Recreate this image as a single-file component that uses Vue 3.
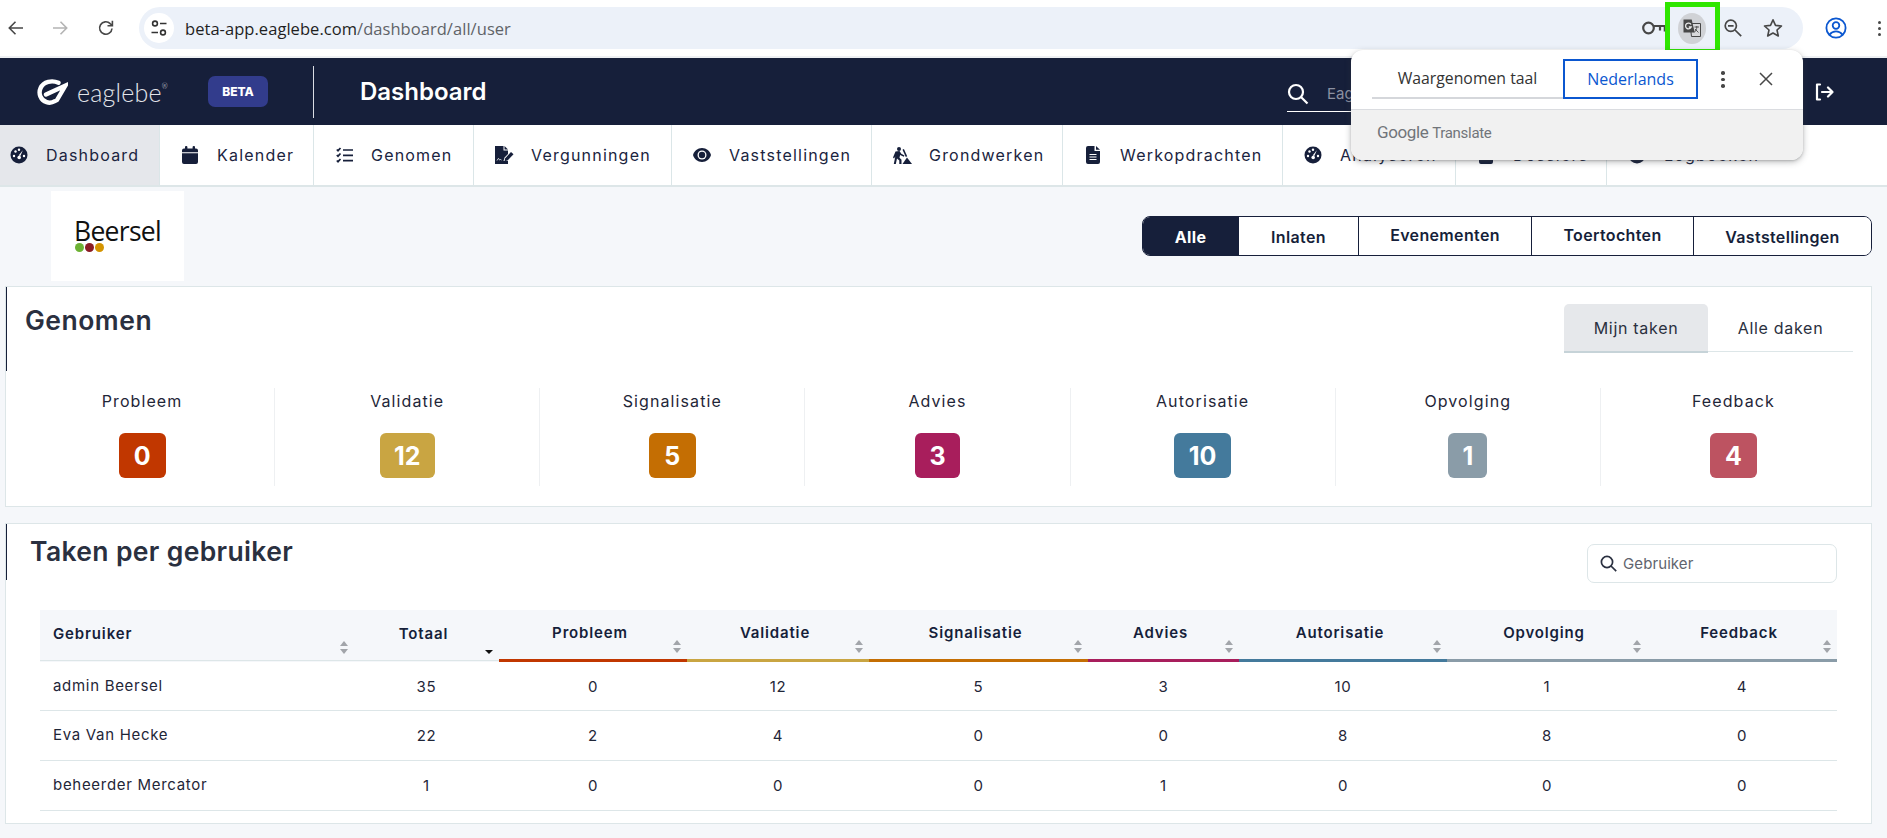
<script setup>
const tabs = [
  { label: 'Dashboard', icon: 'gauge', active: true },
  { label: 'Kalender', icon: 'calendar' },
  { label: 'Genomen', icon: 'list' },
  { label: 'Vergunningen', icon: 'sign' },
  { label: 'Vaststellingen', icon: 'eye' },
  { label: 'Grondwerken', icon: 'dig' },
  { label: 'Werkopdrachten', icon: 'file' },
  { label: 'Analyseren', icon: 'gauge' },
  { label: 'Dossiers', icon: 'file' },
  { label: 'Logboeken', icon: 'gauge' },
]
const filters = [
  { label: 'Alle', active: true },
  { label: 'Inlaten' },
  { label: 'Evenementen', raised: true },
  { label: 'Toertochten', raised: true },
  { label: 'Vaststellingen' },
]
const stats = [
  { label: 'Probleem', value: 0, color: '#c13700', width: 47 },
  { label: 'Validatie', value: 12, color: '#c9a542', width: 55 },
  { label: 'Signalisatie', value: 5, color: '#c46e03', width: 47 },
  { label: 'Advies', value: 3, color: '#a81e5c', width: 45 },
  { label: 'Autorisatie', value: 10, color: '#447a9c', width: 57 },
  { label: 'Opvolging', value: 1, color: '#8a9ca8', width: 39 },
  { label: 'Feedback', value: 4, color: '#bd5361', width: 47 },
]
const rows = [
  { name: 'admin Beersel', total: 35, cells: [0, 12, 5, 3, 10, 1, 4] },
  { name: 'Eva Van Hecke', total: 22, cells: [2, 4, 0, 0, 8, 8, 0] },
  { name: 'beheerder Mercator', total: 1, cells: [0, 0, 0, 1, 0, 0, 0] },
]
</script>

<template>
  <div class="page">
    <header class="chrome">
      <button class="cbtn">
        <svg width="18" height="18" viewBox="0 0 18 18" fill="none" stroke="#474747" stroke-width="1.6"><path d="M16 9H2.5M8.5 2.8 2.3 9l6.2 6.2" /></svg>
      </button>
      <button class="cbtn">
        <svg width="18" height="18" viewBox="0 0 18 18" fill="none" stroke="#b4b4b4" stroke-width="1.6"><path d="M2 9h13.5M9.5 2.8 15.7 9l-6.2 6.2" /></svg>
      </button>
      <button class="cbtn reload">
        <svg width="18" height="18" viewBox="0 0 18 18" fill="none" stroke="#474747" stroke-width="1.6"><path d="M15 9.5A6.2 6.2 0 1 1 13.2 4.6L15.2 6.4" /><path d="M15.4 1.8v4.9h-4.9" /></svg>
      </button>
      <div class="addr">
        <span class="site">
          <svg width="18" height="18" viewBox="0 0 18 18" fill="none" stroke="#333" stroke-width="1.6"><circle cx="5" cy="4.5" r="2.4" /><path d="M10 4.5h6.5M1.5 13.5H8" /><circle cx="13" cy="13.5" r="2.4" /></svg>
        </span>
        <span class="url"><b>beta-app.eaglebe.com</b>/dashboard/all/user</span>
        <div class="tools">
          <span class="tool">
            <svg width="24" height="16" viewBox="0 0 24 16" fill="none" stroke="#474747" stroke-width="2.2"><circle cx="6.500" cy="8" r="5.300" /><path d="M12 6H22.800v5.500M18 6.400v4" /></svg>
          </span>
          <span class="tool">
            <span class="trans">
              <svg width="20" height="20" viewBox="0 0 20 20"><path d="M8 5.500h10.500v13H9.500z" fill="#d8d8da" stroke="#474747" stroke-width="1" /><path d="M1.500 1.500h8.200l3 13H1.500z" fill="#474747" /><path d="M9 6.500A2.900 2.900 0 1 0 9.200 9H6.800" fill="none" stroke="#e8e8e8" stroke-width="1.300" /><path d="M12.500 9h4.500M14.800 8v1c0 2-1 4-2.500 5.300M13 11l3.500 3.500" fill="none" stroke="#474747" stroke-width=".9" /></svg>
            </span>
          </span>
          <span class="tool">
            <svg width="20" height="20" viewBox="0 0 20 20" fill="none" stroke="#474747" stroke-width="1.7"><circle cx="7.8" cy="7.8" r="5.6" /><path d="M12 12l6.200 6.200M5 7.800h5.600" /></svg>
          </span>
          <span class="tool">
            <svg width="20" height="20" viewBox="0 0 20 20" fill="none" stroke="#474747" stroke-width="1.6" stroke-linejoin="round"><path d="M10 1.800l2.500 5.600 6 .6-4.500 4 1.300 6L10 15l-5.300 3 1.300-6-4.500-4 6-.6z" /></svg>
          </span>
        </div>
      </div>
      <svg class="profile" width="24" height="24" viewBox="0 0 24 24" fill="none" stroke="#0b57d0" stroke-width="1.8"><circle cx="12" cy="12" r="9.6" /><circle cx="12" cy="9.5" r="3.3" /><path d="M5.500 18.600c1.800-2.400 4-3.300 6.500-3.300s4.700.9 6.500 3.300" /></svg>
      <span class="ckebab"><i></i><i></i><i></i></span>
    </header>

    <div class="navbar">
      <div class="logo">
        <svg width="31" height="26" viewBox="0 0 31 26" fill="none" stroke="#fff" stroke-width="4.4" stroke-linecap="round"><path d="M21.500 3.800C15 .8 6.500 2.600 3.600 9c-2.500 5.500-.1 12.200 6 14.200 3.200 1 5.800.4 8.200-1" /><path d="M9 15.500 28.500 6.500 20 21" /></svg>
        <span class="wordmark">eaglebe<sup>®</sup></span>
      </div>
      <span class="beta">BETA</span>
      <span class="vline"></span>
      <h1>Dashboard</h1>
      <div class="topsearch">
        <svg width="22" height="22" viewBox="0 0 22 22" fill="none" stroke="#fff" stroke-width="2.2"><circle cx="9" cy="9" r="7" /><path d="M14 14l6.500 6.500" /></svg>
        <span>Eaglebe</span>
      </div>
      <svg class="logout" width="20" height="20" viewBox="0 0 20 20" fill="none" stroke="#fff" stroke-width="2.2" stroke-linecap="round" stroke-linejoin="round"><path d="M6 2.500H3v15h3M8 10h10.500M14 5.500l4.500 4.500-4.500 4.500" /></svg>
    </div>

    <nav class="tabs">
      <a v-for="t in tabs" :key="t.label + t.icon" class="tab" :class="{ on: t.active }">
        <span class="tico">
          <svg v-if="t.icon === 'gauge'" width="18" height="18" viewBox="0 0 18 18"><circle cx="9" cy="9" r="8.500" fill="#161f3a" /><g fill="#fff"><circle cx="4" cy="10" r="1.200" /><circle cx="5.500" cy="5.500" r="1.200" /><circle cx="9" cy="3.800" r="1.200" /><circle cx="14" cy="10" r="1.200" /><path d="M12.800 4.200 10.300 10 8.600 9.500z" /><circle cx="9.200" cy="11.500" r="1.800" /></g></svg>
          <svg v-else-if="t.icon === 'calendar'" width="16" height="18" viewBox="0 0 16 18" fill="#161f3a"><rect x="3" y="0" width="2.400" height="4" rx="1" /><rect x="10.600" y="0" width="2.400" height="4" rx="1" /><path d="M0 4.500A2 2 0 0 1 2 2.500h12a2 2 0 0 1 2 2v1.800H0zM0 7.300h16V16a2 2 0 0 1-2 2H2a2 2 0 0 1-2-2z" /></svg>
          <svg v-else-if="t.icon === 'list'" width="17" height="16" viewBox="0 0 17 16" fill="none" stroke="#161f3a" stroke-width="1.700"><path d="M.8 2.500 2 3.700 4.500 1M.8 8 2 9.200 4.500 6.500M.8 13.500 2 14.700 4.500 12M7 3h10M7 8.300h10M7 13.600h10" /></svg>
          <svg v-else-if="t.icon === 'sign'" width="19" height="18" viewBox="0 0 19 18"><path d="M0 0h8.500v4.500H13V8l-3.500 3.500-1 3.500H13v3H0z" fill="#161f3a" /><path d="M9.500 0v3.500H13z" fill="#161f3a" /><path d="M2 14.500c1-2 1.500-2.500 2-1.500s.5 1.500 1.500.5l1 .5" fill="none" stroke="#fff" stroke-width=".8" /><path d="M10 12.500l6-6.500 2.500 2.200-6 6.300-3 .8z" fill="#161f3a" /></svg>
          <svg v-else-if="t.icon === 'eye'" width="18" height="14" viewBox="0 0 18 14"><path d="M9 0c4.500 0 7.800 3.200 9 7-1.200 3.800-4.500 7-9 7s-7.800-3.200-9-7C1.200 3.200 4.500 0 9 0z" fill="#161f3a" /><circle cx="9" cy="7" r="4.500" fill="#fff" /><circle cx="9" cy="7" r="3.200" fill="#161f3a" /></svg>
          <svg v-else-if="t.icon === 'dig'" width="19" height="17" viewBox="0 0 19 17" fill="#161f3a"><circle cx="6" cy="2" r="2" /><path d="M2.500 4.500l4-.5 1.800 2.800 3.200 1.600-.7 1.400-3.700-1.800-.6 2.700 2 2V17H6.300v-3.400L4 11.500 2.800 17H.8l1.500-7.500L1 11.500 0 10.500z" /><path d="M9.500 17l4.500-6.500 5 6.500z" /><path d="M9.500 2.800l1.400-.7 3.300 7.200-1.400.6z" /></svg>
          <svg v-else width="14" height="18" viewBox="0 0 14 18"><path d="M2 0h6.500v5H14v11a2 2 0 0 1-2 2H2a2 2 0 0 1-2-2V2a2 2 0 0 1 2-2z" fill="#161f3a" /><path d="M10 0l4 3.800h-4z" fill="#161f3a" /><path d="M3.500 8.500h7M3.500 11h7M3.500 13.500h7" stroke="#fff" stroke-width="1.100" /></svg>
        </span>
        <span>{{ t.label }}</span>
      </a>
    </nav>

    <main class="content">
      <div class="toprow">
        <div class="cityLogo">
          <div class="cityInner">
            <span class="cityName">Beersel</span>
            <span class="dots"><i class="d1"></i><i class="d2"></i><i class="d3"></i></span>
          </div>
        </div>
        <div class="segment">
          <button v-for="f in filters" :key="f.label" :class="{ on: f.active, raised: f.raised }"><span>{{ f.label }}</span></button>
        </div>
      </div>

      <section class="card">
        <div class="chead">
          <h2 class="ctitle big">Genomen</h2>
          <div class="mine">
            <a class="mtab on">Mijn taken</a>
            <a class="mtab">Alle daken</a>
          </div>
        </div>
        <div class="stats">
          <div v-for="s in stats" :key="s.label" class="stat">
            <div class="slabel">{{ s.label }}</div>
            <div class="badge" :style="{ background: s.color, width: s.width + 'px' }">{{ s.value }}</div>
          </div>
        </div>
      </section>

      <section class="card second">
        <div class="thead2">
          <h2 class="ctitle small">Taken per gebruiker</h2>
          <div class="usearch">
            <svg width="17" height="17" viewBox="0 0 17 17" fill="none" stroke="#2a3040" stroke-width="1.700"><circle cx="7" cy="7" r="5.600" /><path d="M11 11l5.200 5.200" /></svg>
            <span>Gebruiker</span>
          </div>
        </div>
        <div class="table">
          <div class="hrow">
            <div class="th left">Gebruiker<span class="sort"><i></i><i></i></span></div>
            <div class="th">Totaal<span class="sort down"><i></i></span></div>
            <div v-for="s in stats" :key="s.label" class="th colored" :style="{ borderBottomColor: s.color === '#bd5361' ? '#8a9ca8' : s.color }">
              {{ s.label }}<span class="sort"><i></i><i></i></span>
            </div>
          </div>
          <div v-for="r in rows" :key="r.name" class="brow">
            <div class="td left">{{ r.name }}</div>
            <div class="td">{{ r.total }}</div>
            <div v-for="(c, i) in r.cells" :key="i" class="td">{{ c }}</div>
          </div>
        </div>
      </section>
    </main>

    <div class="highlight"></div>
    <div class="popup">
      <div class="ptop">
        <span class="plang">Waargenomen taal</span>
        <span class="pnl">Nederlands</span>
        <span class="pkebab"><i></i><i></i><i></i></span>
        <svg class="pclose" width="14" height="14" viewBox="0 0 14 14" stroke="#474747" stroke-width="1.500"><path d="M1 1l12 12M13 1 1 13" /></svg>
      </div>
      <div class="pfoot"><span class="g">Google</span> <span class="gt">Translate</span></div>
    </div>
  </div>
</template>

<style>
html, body { margin: 0; background: #f5f7fa; }
</style>

<style scoped>
.page { position: relative; width: 1887px; height: 838px; overflow: hidden; background: #f5f7fa; font-family: Inter, "Noto Sans", sans-serif; color: #1b2440; }
.chrome { height: 56px; background: #fff; border-bottom: 2px solid #eef0f3; display: flex; align-items: center; gap: 12px; box-sizing: content-box; }
.cbtn { width: 32px; height: 32px; padding: 0; border: 0; background: none; display: flex; align-items: center; justify-content: center; }
.reload { margin-left: 2px; }
.addr { margin-left: 5px; width: 1664px; height: 42px; border-radius: 21px; background: #ecf1f9; display: flex; align-items: center; padding-left: 5px; box-sizing: border-box; }
.site { width: 30px; height: 30px; border-radius: 50%; background: #fff; display: flex; align-items: center; justify-content: center; }
.url { margin-left: 11px; font-family: "Open Sans", sans-serif; font-size: 16.5px; color: #5f6368; letter-spacing: .05px; }
.url b { font-weight: 400; color: #1f1f1f; }
.tools { margin-left: auto; display: flex; align-items: center; padding-right: 12px; }
.tool { display: flex; justify-content: center; align-items: center; width: 38px; }
.tool:nth-child(3) { width: 44px; }
.tool:nth-child(4) { width: 36px; }
.trans { width: 28px; height: 31px; border-radius: 50%; background: #d0d2d6; display: flex; align-items: center; justify-content: center; }
.profile { margin-left: 9px; flex: none; }
.ckebab { margin-left: 18px; display: flex; flex-direction: column; gap: 3px; }
.ckebab i { width: 3px; height: 3px; border-radius: 50%; background: #474747; }

.navbar { height: 67px; background: #161f3a; display: flex; align-items: center; color: #fff; }
.logo { width: 171px; margin-left: 37px; display: flex; align-items: center; gap: 9px; }
.wordmark { font-family: Lato, sans-serif; font-weight: 300; font-size: 25px; color: #e3e5ea; letter-spacing: .2px; }
.wordmark sup { font-size: 7px; vertical-align: 13px; line-height: 0; }
.beta { width: 60px; height: 31px; border-radius: 7px; background: #323c8c; display: flex; align-items: center; justify-content: center; font-size: 12px; font-weight: 800; }
.vline { width: 1px; height: 52px; background: #d9dce3; margin-left: 45px; }
.navbar h1 { margin: 0 0 0 46px; font-size: 24px; font-weight: 600; letter-spacing: 0; }
.topsearch { margin-left: auto; width: 500px; height: 35px; margin-top: 5px; border-bottom: 1px solid #fff; display: flex; align-items: center; gap: 18px; font-size: 15px; color: #8b90a1; box-sizing: border-box; }
.logout { margin: 0 53px 0 27px; flex: none; }

.tabs { height: 62px; box-sizing: border-box; background: #fff; border-bottom: 2px solid #dde6e8; display: grid; grid-template-columns: 160px 154px 160px 198px 200px 191px 220px 173px 151px 190px; }
.tab { display: flex; align-items: center; padding-left: 20px; gap: 17px; font-size: 16px; letter-spacing: 1.2px; border-right: 1.500px solid #dbe6e8; box-sizing: border-box; font-weight: 400; color: #1b2440; }
.tab:last-child { border-right: 0; }
.tab.on { background: #e5e7eb; padding-left: 9px; }
.tico { width: 20px; display: flex; align-items: center; justify-content: center; flex: none; }

.content { display: flex; flex-direction: column; }
.toprow { display: flex; justify-content: space-between; align-items: flex-start; padding: 4px 15px 0 51px; height: 99px; box-sizing: border-box; }
.cityLogo { width: 133px; height: 90px; background: #fff; display: flex; align-items: center; justify-content: center; }
.cityInner { display: flex; flex-direction: column; margin-top: -5px; }
.cityName { font-family: "Open Sans", sans-serif; font-size: 26.5px; line-height: 30px; color: #111; letter-spacing: -.7px; }
.dots { display: flex; gap: 1px; margin-left: 1px; margin-top: -3px; }
.dots i { width: 9px; height: 9px; border-radius: 50%; }
.d1 { background: #6db234; }
.d2 { background: #8b1c24; }
.d3 { background: #d49400; }
.segment { margin-top: 25px; display: grid; grid-template-columns: 95px 120px 173px 162px 178px; height: 40px; border: 1px solid #161f3a; border-radius: 8px; background: #fff; overflow: hidden; box-sizing: border-box; width: 730px; }
.segment button { border: 0; border-left: 1px solid #161f3a; background: #fff; font: 600 16px Inter, sans-serif; letter-spacing: .35px; color: #161f3a; padding: 2px 0 0; display: flex; align-items: center; justify-content: center; }
.segment button:first-child { border-left: 0; }
.segment button.on { background: #161f3a; color: #fff; font-weight: 700; }
.segment button.raised { padding: 0 0 3px; }

.card { margin: 0 15px 0 5px; height: 221px; background: #fff; border: 1px solid #dde6e8; box-sizing: border-box; }
.second { margin-top: 16px; height: 301px; }
.chead { display: flex; justify-content: space-between; height: 84px; border-left: 1px solid #161f3a; padding: 0 18px 0 18px; }
.ctitle { margin: 0; font-weight: 600; color: #2a3040; }
.big { font-size: 26.5px; line-height: 36px; padding-top: 15px; letter-spacing: .5px; }
.mine { display: flex; margin-top: 17px; height: 49px; }
.mtab { width: 144px; display: flex; align-items: center; justify-content: center; font-size: 16px; letter-spacing: .7px; color: #2a3040; border-bottom: 1px solid #dde6e8; height: 48px; box-sizing: border-box; }
.mtab.on { background: #e6e8eb; border-radius: 5px 5px 0 0; border-bottom: 2px solid #c6d3d8; height: 49px; }
.mtab:last-child { width: 145px; }
.stats { margin: 17px 5px 0 4px; display: grid; grid-template-columns: repeat(7, 1fr); }
.stat { height: 98px; border-right: 1px solid #eef0f2; text-align: center; display: flex; flex-direction: column; align-items: center; }
.stat:last-child { border-right: 0; }
.slabel { font-size: 16px; line-height: 26px; letter-spacing: 1.1px; color: #1f2638; }
.badge { margin-top: 19px; height: 45px; border-radius: 6px; color: #fff; font-size: 25px; font-weight: 700; display: flex; align-items: center; justify-content: center; }

.thead2 { display: flex; justify-content: space-between; align-items: flex-start; height: 86px; padding-right: 34px; }
.small { width: 230px; flex: none; border-left: 1px solid #161f3a; height: 56px; padding-left: 23px; box-sizing: content-box; font-size: 26.5px; line-height: 54px; white-space: nowrap; letter-spacing: .35px; }
.usearch { margin-top: 20px; width: 250px; height: 39px; border: 1px solid #dde6e8; border-radius: 7px; box-sizing: border-box; display: flex; align-items: center; padding-left: 12px; gap: 6px; font-size: 15px; color: #60646e; letter-spacing: .1px; background: #fff; }
.table { margin-left: 34px; width: 1797px; }
.hrow, .brow { display: grid; grid-template-columns: 314px 145px 188px 182px 219px 151px 208px 200px 190px; }
.hrow { height: 52px; background: #f5f7fa; }
.th { position: relative; box-sizing: border-box; display: flex; justify-content: center; height: 51px; padding: 13px 6px 0 0; font-size: 15px; line-height: 22px; font-weight: 600; letter-spacing: .85px; color: #161f3a; border-bottom: 1px solid #dde6e8; }
.th.left { justify-content: flex-start; padding-left: 13px; }
.th.colored { border-bottom: 3px solid; height: 52px; padding-top: 12px; }
.sort { position: absolute; right: 6px; bottom: 6px; display: flex; flex-direction: column; gap: 3px; }
.sort i { display: block; width: 0; height: 0; border: 4px solid transparent; border-top: 0; border-bottom: 5px solid #a2a5aa; }
.sort i:last-child { border-bottom: 0; border-top: 5px solid #a2a5aa; }
.sort.down { right: 6px; bottom: 6px; }
.sort.down i { border-bottom: 0; border-top: 4px solid #111; }
.brow { height: 50px; border-bottom: 1px solid #dde6e8; box-sizing: border-box; }
.brow:nth-child(2) { height: 49px; }
.td { display: flex; align-items: center; justify-content: center; font-size: 15px; color: #1f2638; letter-spacing: .7px; }
.td.left { justify-content: flex-start; padding: 0 0 2px 13px; box-sizing: border-box; }

.highlight { position: absolute; left: 1665px; top: 2px; width: 55px; height: 52px; border: 5px solid #2fe600; box-sizing: border-box; }
.popup { position: absolute; left: 1351px; top: 50px; width: 452px; height: 110px; border-radius: 12px; background: #fff; overflow: hidden; box-shadow: 0 2px 6px rgba(60, 64, 67, .35), 0 1px 2px rgba(60, 64, 67, .2); font-family: "Open Sans", sans-serif; }
.ptop { position: relative; height: 60px; border-bottom: 1px solid #dadce0; box-sizing: border-box; display: flex; align-items: flex-start; }
.plang { margin: 9px 0 0 21px; width: 191px; height: 40px; border-bottom: 2px solid #d5d7db; box-sizing: border-box; text-align: center; font-size: 15.800px; line-height: 39px; color: #333; }
.pnl { margin-top: 9px; width: 135px; height: 40px; border: 2px solid #0b57d0; box-sizing: border-box; text-align: center; font-size: 16px; line-height: 36px; color: #0b57d0; }
.pkebab { margin: 21px 0 0 23px; display: flex; flex-direction: column; gap: 3px; }
.pkebab i { width: 3.500px; height: 3.500px; border-radius: 50%; background: #474747; }
.pclose { margin: 22px 0 0 34px; }
.pfoot { height: 50px; background: #f1f1f1; padding: 10px 0 0 26px; box-sizing: border-box; color: #71757a; font-size: 15px; line-height: 24px; }
.g { font-family: Roboto, sans-serif; font-size: 17px; letter-spacing: -.4px; }
.gt { font-family: Roboto, sans-serif; font-size: 15px; letter-spacing: -.3px; }
</style>
